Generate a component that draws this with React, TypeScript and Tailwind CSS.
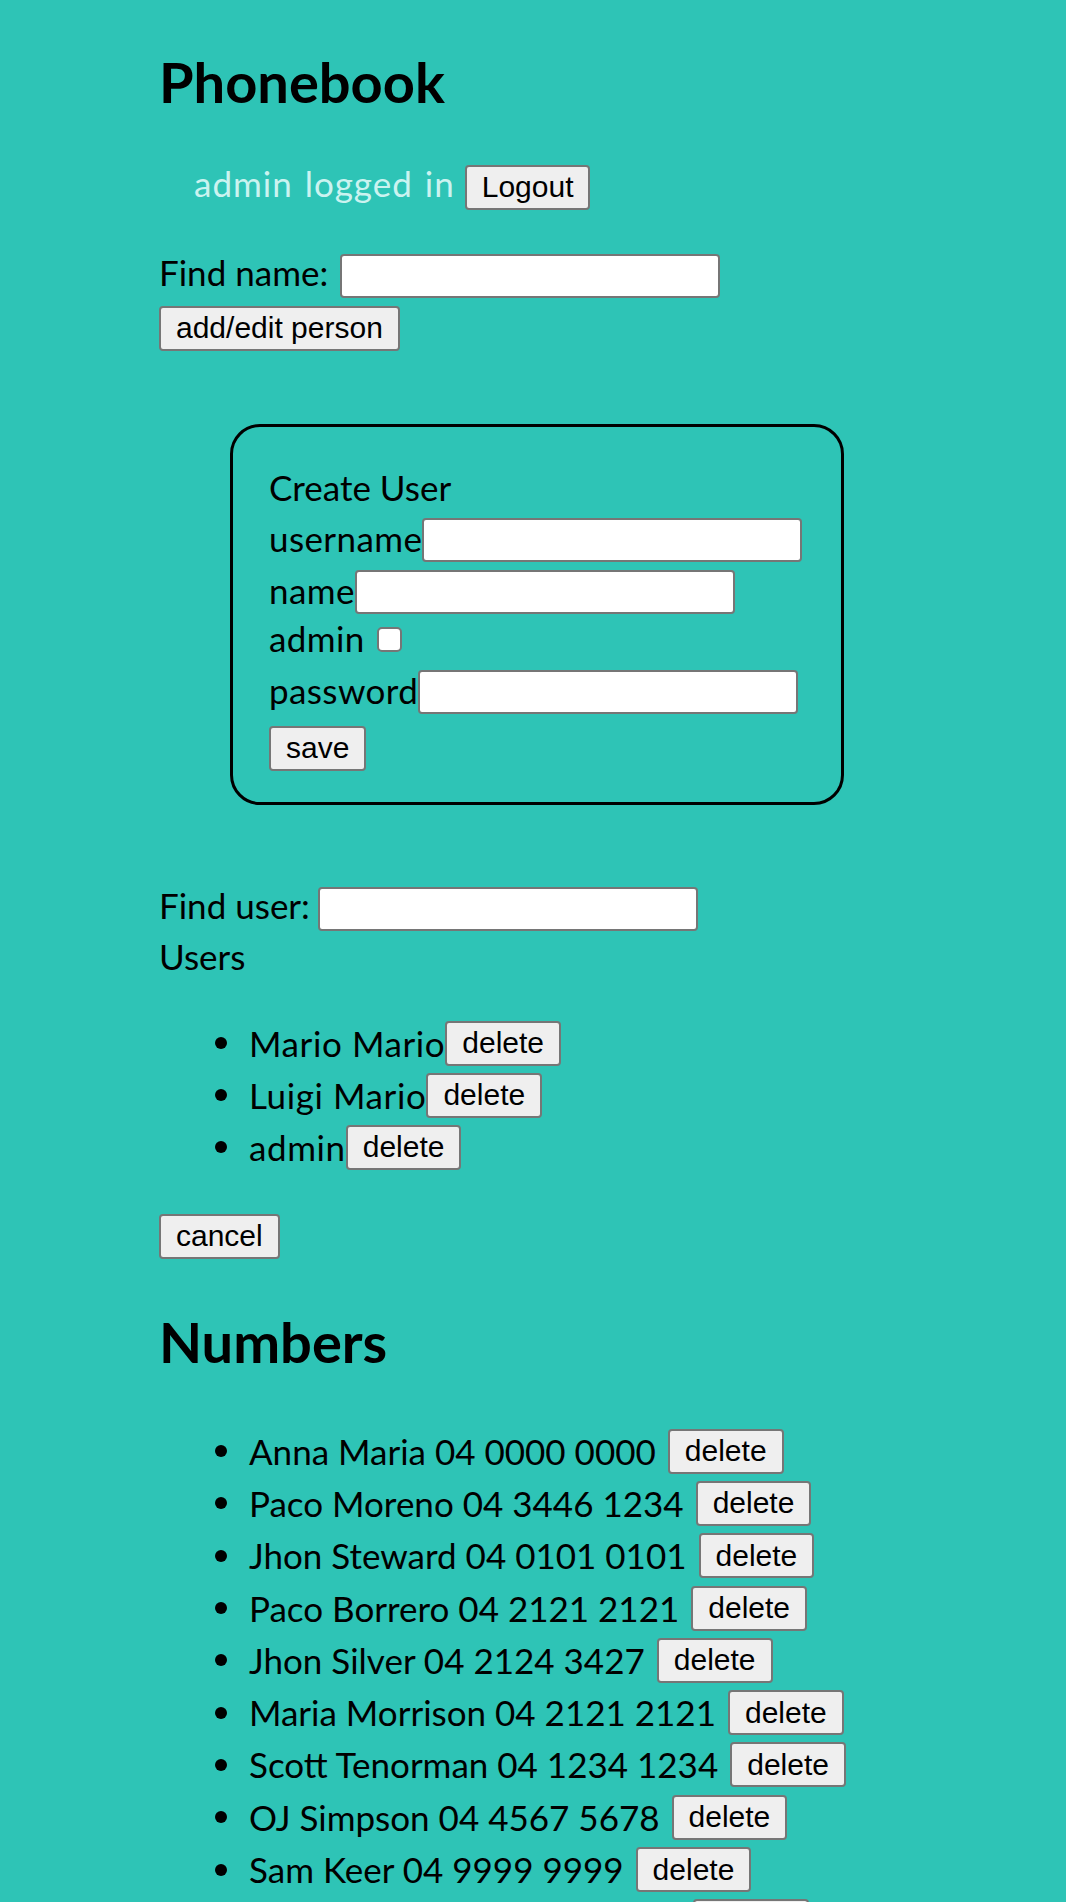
const users = ['Mario Mario', 'Luigi Mario', 'admin'];

const numbers = [
  'Anna Maria 04 0000 0000',
  'Paco Moreno 04 3446 1234',
  'Jhon Steward 04 0101 0101',
  'Paco Borrero 04 2121 2121',
  'Jhon Silver 04 2124 3427',
  'Maria Morrison 04 2121 2121',
  'Scott Tenorman 04 1234 1234',
  'OJ Simpson 04 4567 5678',
  'Sam Keer 04 9999 9999',
  'Ada Lovelace 04 3944 5323',
];

const btn =
  "h-[45px] px-[15px] bg-[#efefef] border-2 border-[#767676] rounded-[4px] text-[30px] leading-none text-black font-['Liberation_Sans',Arial,sans-serif] shrink-0";
const field = 'h-[44px] w-[380px] bg-white border-2 border-[#767676] rounded-[4px] shrink-0';

const Bullet = () => <span className="ml-[56px] mr-[22px] w-[12px] h-[12px] rounded-full bg-black shrink-0" />;

export default function App() {
  return (
    <div className="min-h-screen bg-[#2ec4b6] font-['Lato',sans-serif] text-[35px] text-black pl-[159px] pb-[60px]">
      <h1 className="pt-[54px] text-[56px] leading-[55px] font-bold">Phonebook</h1>

      {/* login status */}
      <div className="mt-[48px] flex items-baseline gap-[10px] pl-[35px]">
        <span className="text-[#cbf3f0] tracking-[1px] [word-spacing:2px]">admin logged in</span>
        <button className={btn}>Logout</button>
      </div>

      <div className="mt-[44px] flex items-center h-[44px] gap-[12px]">
        <span className="leading-[35px] mb-[7px]">Find name:</span>
        <input className={field} />
      </div>
      <button className={`${btn} mt-[8px]`}>add/edit person</button>

      {/* create user form */}
      <div className="mt-[73px] ml-[71px] w-[614px] h-[381px] border-[3px] border-black rounded-[30px] pl-[36px] pt-[37.5px]">
        <div className="h-[50px] leading-[46px]">Create User</div>
        <div className="h-[52px] flex items-center">
          <span className="leading-[35px] mb-[4px] tracking-[0.4px]">username</span>
          <input className={field} />
        </div>
        <div className="h-[52px] flex items-center">
          <span className="leading-[35px] mb-[4px] tracking-[0.4px]">name</span>
          <input className={field} />
        </div>
        <div className="h-[48px] flex items-center">
          <span className="leading-[35px] mb-[8px] tracking-[0.4px]">admin</span>
          <span className="ml-[12px] mb-[6px] w-[25px] h-[25px] bg-white border-[2.5px] border-[#767676] rounded-[5px]" />
        </div>
        <div className="h-[52px] flex items-center">
          <span className="leading-[35px] mb-[4px] tracking-[0.4px]">password</span>
          <input className={field} />
        </div>
        <button className={`${btn} mt-[4.5px]`}>save</button>
      </div>

      <div className="mt-[82px] flex items-center h-[44px] gap-[8px]">
        <span className="leading-[35px] mb-[7px]">Find user:</span>
        <input className={field} />
      </div>
      <div className="mt-[2px] h-[46px] leading-[46px]">Users</div>

      <ul className="mt-[38.5px]">
        {users.map((u) => (
          <li key={u} className="h-[52px] flex items-center">
            <Bullet />
            <span className="leading-[35px] tracking-[0.6px]">{u}</span>
            <button className={btn}>delete</button>
          </li>
        ))}
      </ul>

      <button className={`${btn} mt-[40.5px]`}>cancel</button>

      <h1 className="mt-[55px] text-[56px] leading-[55px] font-bold">Numbers</h1>

      <ul className="mt-[56.5px]">
        {numbers.map((n) => (
          <li key={n} className="h-[52.3px] flex items-center">
            <Bullet />
            <span className="leading-[35px] mr-[12px]">{n}</span>
            <button className={btn}>delete</button>
          </li>
        ))}
      </ul>
    </div>
  );
}
